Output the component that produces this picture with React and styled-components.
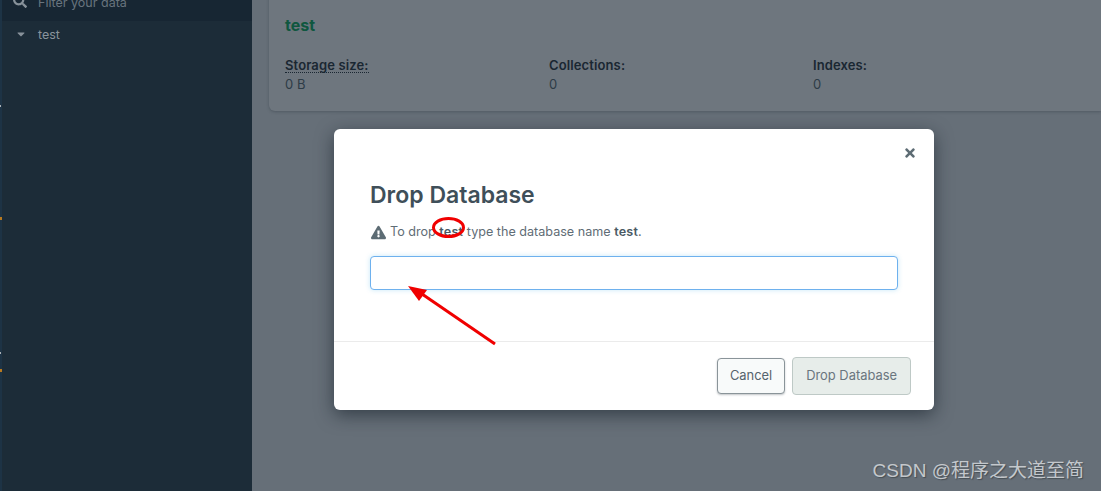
import React from "react";
import styled, { createGlobalStyle } from "styled-components";
import { FaSearch, FaCaretDown, FaExclamationTriangle, FaTimes } from "react-icons/fa";

const Global = createGlobalStyle`
  html, body { margin: 0; padding: 0; height: 491px; overflow: hidden; background: #666f78; }
  body { font-family: Inter, "Liberation Sans", sans-serif; }
  * { box-sizing: border-box; }
`;
const Page = styled.div`
  position: relative; width: 1101px; height: 491px; overflow: hidden;
  display: flex; background: #666f78;
`;
const Sidebar = styled.aside`
  width: 252px; flex: none; background: #1c2c38; display: flex; flex-direction: column;
  border-left: 2px solid #1d3345;
`;
const EdgeMark = styled.i`
  position: absolute; left: 0; top: ${p => p.$y}px; width: ${p => p.$w}px; height: ${p => p.$h}px; background: ${p => p.$color};
`;
const FilterBar = styled.div`
  height: 37px; margin-top: -16px; background: #172633; display: flex; align-items: center;
  gap: 12px; padding-left: 11px; color: #68747e; font-size: 12.5px;
  svg { color: #87919a; font-size: 14px; margin-top: -3px; }
  span { margin: -1px 0 0 -1px; }
`;
const TreeRow = styled.div`
  display: flex; align-items: center; height: 26px; padding-left: 13px; gap: 11px;
  color: #8a949c; font-size: 12.5px;
  svg { font-size: 12px; color: #87919a; }
`;
const Main = styled.main`
  flex: 1; padding: 0 0 0 17px; min-width: 0;
`;
const Card = styled.section`
  height: 127px; margin-top: -16px; background: #6e767e; border-radius: 0 0 0 6px;
  padding: 31px 16px 0; box-shadow: 0 1px 3px rgba(40,50,60,.35);
`;
const CardTitle = styled.h2`
  margin: 0 0 22px; font-size: 16px; line-height: 20px; font-weight: 700; color: #0f573f;
`;
const Stats = styled.div`
  display: grid; grid-template-columns: repeat(3, 264px);
`;
const Stat = styled.div`
  font-size: 13px; line-height: 20px; color: #2d3b46; letter-spacing: .1px;
`;
const StatLabel = styled.div`
  font-weight: 600; color: #1a2732; line-height: 17px; letter-spacing: .12px;
  span { border-bottom: ${p => (p.$dotted ? "1px dotted #1a2732" : "none")}; display: inline-block; line-height: 14px; }
`;
const Overlay = styled.div`
  position: absolute; inset: 0; padding: 129px 0 0 334px;
`;
const Modal = styled.div`
  width: 600px; height: 281px; background: #fff; border-radius: 6px;
  box-shadow: 0 5px 18px rgba(20,30,40,.6);
  display: flex; flex-direction: column; position: relative;
`;
const Close = styled.button`
  position: absolute; top: 17px; right: 17px; border: 0; background: none; padding: 0;
  color: #5d6c74; font-size: 14px; line-height: 0; display: flex;
`;
const Body = styled.div`
  height: 213px; flex: none; padding: 52px 36px 0; border-bottom: 1px solid #ebebeb;
`;
const Title = styled.h3`
  margin: 0 0 14px; font-size: 23px; line-height: 28px; font-weight: 600; color: #3f4f59;
`;
const Warning = styled.p`
  margin: 0 0 15px; display: flex; align-items: center; font-size: 12.6px; line-height: 18px; color: #5f6d76;
  white-space: pre;
  svg { font-size: 15px; margin: 0 4px 0 1px; color: #5d6c74; }
  b { font-weight: 600; color: #4a5963; letter-spacing: .2px; }
`;
const NameInput = styled.input`
  display: block; width: 528px; height: 34px; border: 1px solid #6eb1ee; border-radius: 4px;
  background: #fff; outline: none; box-shadow: 0 0 5px rgba(67,177,229,.3);
`;
const Footer = styled.div`
  flex: 1; display: flex; justify-content: flex-end; align-items: center; gap: 7px; padding: 0 23px 0 0;
`;
const Button = styled.button`
  height: ${p => (p.$primary ? "38px" : "36px")};
  padding: 0 ${p => (p.$primary ? "13px" : "12px")} 2px; font: 12.9px Inter, "Liberation Sans", sans-serif; border-radius: 4px;
  color: ${p => (p.$primary ? "#6a767e" : "#55636c")};
  background: ${p => (p.$primary ? "#e7edea" : "#f8fafa")};
  border: 1px solid ${p => (p.$primary ? "#bec9c6" : "#8a9499")};
  box-shadow: ${p => (p.$primary ? "none" : "0 1px 2px rgba(50,60,70,.3)")};
`;
const Annotation = styled.svg`
  position: absolute; left: 0; top: 0; pointer-events: none;
`;
const Watermark = styled.div`
  position: absolute; right: 17px; bottom: 8px; font-family: "Liberation Sans", "Noto Sans CJK SC", sans-serif;
  font-size: 19px; line-height: 24px; color: #c4c8cc; text-shadow: 1px 1px 1px rgba(40,45,50,.5);
`;

export default function App() {
  return (
    <Page>
      <Global />
      <Sidebar>
        <FilterBar><FaSearch /><span>Filter your data</span></FilterBar>
        <TreeRow><FaCaretDown /><span>test</span></TreeRow>
      </Sidebar>
      <Main>
        <Card>
          <CardTitle>test</CardTitle>
          <Stats>
            <Stat><StatLabel $dotted><span>Storage size:</span></StatLabel>0 B</Stat>
            <Stat><StatLabel><span>Collections:</span></StatLabel>0</Stat>
            <Stat><StatLabel><span>Indexes:</span></StatLabel>0</Stat>
          </Stats>
        </Card>
      </Main>
      <Overlay>
        <Modal>
          <Close aria-label="Close"><FaTimes /></Close>
          <Body>
            <Title>Drop Database</Title>
            <Warning><FaExclamationTriangle />To drop <b>test</b> type the database name <b>test</b>.</Warning>
            <NameInput />
          </Body>
          <Footer>
            <Button>Cancel</Button>
            <Button $primary>Drop Database</Button>
          </Footer>
        </Modal>
      </Overlay>
      <Annotation width="1101" height="491" viewBox="0 0 1101 491">
        <ellipse cx="448.5" cy="227.5" rx="15" ry="9" fill="none" stroke="#f00000" strokeWidth="3" />
        <line x1="495" y1="344" x2="422" y2="294" stroke="#f00000" strokeWidth="3" />
        <polygon points="408,286 427,290 419,301" fill="#f00000" />
      </Annotation>
      <EdgeMark $y={217} $w={2} $h={3} $color="#b87a20" />
      <EdgeMark $y={369} $w={2} $h={3} $color="#b87a20" />
      <EdgeMark $y={352} $w={1} $h={2} $color="#aab0b5" />
      <EdgeMark $y={105} $w={1} $h={2} $color="#aab0b5" />
      <Watermark>CSDN @程序之大道至简</Watermark>
    </Page>
  );
}
